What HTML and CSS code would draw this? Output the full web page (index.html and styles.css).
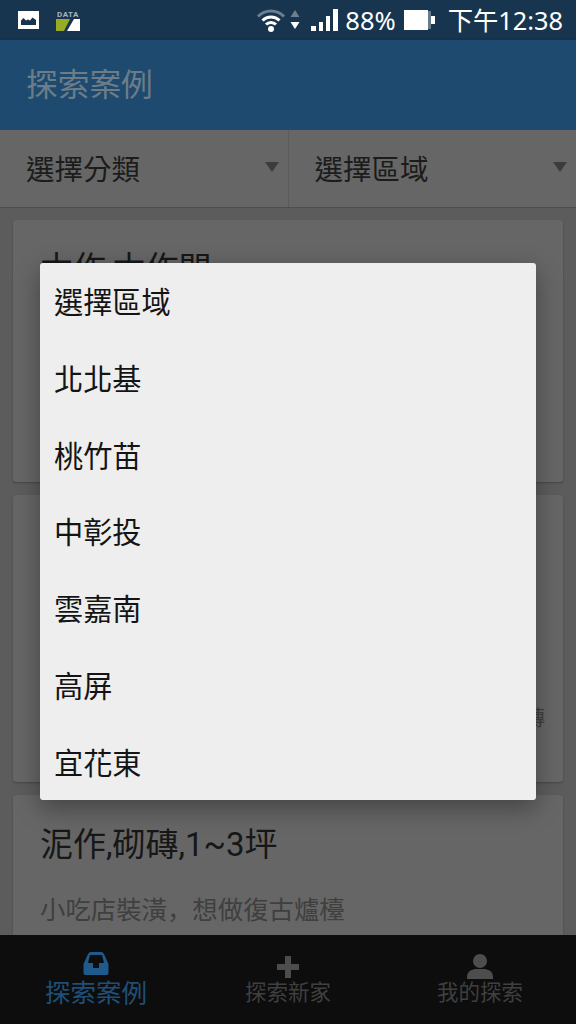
FILE: index.html
```html
<!DOCTYPE html>
<html lang="zh-Hant">
<head>
  <meta charset="UTF-8">
  <title>探索案例</title>
  <link rel="stylesheet" href="styles.css">
</head>
<body>
  <div class="screen">
    <div class="status-bar">
      <svg class="st-photo" width="21" height="18" viewBox="0 0 21 18">
        <rect width="21" height="18" fill="#fff"/>
        <path d="M3 14V9.500L5.500 7 8 9.500 10 8.500 12 9.500 14.500 6.500 18 9V14Z" fill="#17354f"/>
      </svg>
      <div class="st-data">
        <span class="st-data-label">DATA</span>
        <svg width="24" height="12" viewBox="0 0 24 12">
          <path d="M0 0H14L8 12H0Z" fill="#98ad24"/>
          <path d="M24 0V12H11L18 0Z" fill="#fff"/>
        </svg>
      </div>
      <div class="st-right">
        <svg class="st-wifi" width="30" height="26" viewBox="0 0 30 26">
          <path d="M2 9.500A18 18 0 0 1 28 9.500" fill="none" stroke="#6d7f8d" stroke-width="3"/>
          <path d="M6.500 13.500A12 12 0 0 1 23.500 13.500" fill="none" stroke="#fff" stroke-width="3"/>
          <path d="M10 17.500A7 7 0 0 1 20 17.500" fill="none" stroke="#fff" stroke-width="3"/>
          <circle cx="15" cy="22" r="3" fill="#fff"/>
        </svg>
        <svg class="st-arrows" width="10" height="22" viewBox="0 0 10 22">
          <path d="M5 1 9.500 8H.5Z" fill="#6d7f8d"/>
          <path d="M5 20 9.500 13H.5Z" fill="#fff"/>
        </svg>
        <svg class="st-signal" width="28" height="24" viewBox="0 0 28 24">
          <rect x="0" y="18" width="5" height="5" fill="#fff"/>
          <rect x="8" y="14" width="4" height="9" fill="#fff"/>
          <rect x="15" y="8" width="4" height="15" fill="#fff"/>
          <rect x="22" y="1" width="5" height="22" fill="#fff"/>
        </svg>
        <span class="st-pct">88%</span>
        <svg class="st-battery" width="31" height="20" viewBox="0 0 31 20">
          <rect x="0" y="0" width="24" height="20" fill="#fff"/>
          <rect x="24" y="1" width="3" height="18" fill="#fff" opacity=".35"/>
          <rect x="27" y="6" width="4" height="8" fill="#fff"/>
        </svg>
        <span class="st-time">下午12:38</span>
      </div>
    </div>

    <header class="app-bar">探索案例</header>

    <div class="filters">
      <div class="filter">選擇分類<i class="caret"></i></div>
      <div class="filter">選擇區域<i class="caret"></i></div>
    </div>

    <main class="list">
      <div class="card card-first">
        <div class="card-title">木作,木作門</div>
      </div>
      <div class="card card-second">
        <div class="card-desc card-desc-end">磚</div>
      </div>
      <div class="card card-last">
        <div class="card-title">泥作,砌磚,1~3坪</div>
        <div class="card-desc">小吃店裝潢<span class="low-comma" lang="zh-Hans">，</span>想做復古爐檯</div>
      </div>
    </main>

    <nav class="tabs">
      <div class="tab tab-active">
        <svg width="28" height="28" viewBox="0 0 28 28">
          <path d="M1.500 12 6 2Q7 0 9 0H19Q21 0 22 2L26.500 12V21Q26.500 23 24.500 23H3.500Q1.500 23 1.500 21ZM8 3H20L22 11H17V16H11V11H6Z" fill="#1f5a8c" fill-rule="evenodd"/>
        </svg>
        <span>探索案例</span>
      </div>
      <div class="tab">
        <svg width="28" height="28" viewBox="0 0 28 28">
          <path d="M11 4H17V12H25V18H17V26H11V18H3V12H11Z" fill="#4d4d4d"/>
        </svg>
        <span class="tab-small">探索新家</span>
      </div>
      <div class="tab">
        <svg width="28" height="28" viewBox="0 0 28 28">
          <circle cx="14" cy="9" r="7" fill="#4d4d4d"/>
          <path d="M1 27V25Q1 18 9 17H19Q27 18 27 25V27Z" fill="#4d4d4d"/>
        </svg>
        <span class="tab-small">我的探索</span>
      </div>
    </nav>

    <div class="dialog">
      <div class="dialog-item">選擇區域</div>
      <div class="dialog-item">北北基</div>
      <div class="dialog-item">桃竹苗</div>
      <div class="dialog-item">中彰投</div>
      <div class="dialog-item">雲嘉南</div>
      <div class="dialog-item">高屏</div>
      <div class="dialog-item">宜花東</div>
    </div>
  </div>
</body>
</html>
```

FILE: styles.css
```css
* {
  box-sizing: border-box;
}

body {
  margin: 0;
  font-family: Roboto, "Noto Sans CJK TC", sans-serif;
  background: #5c5c5c;
}

.screen {
  position: relative;
  display: flex;
  flex-direction: column;
  width: 576px;
  height: 1024px;
  overflow: hidden;
}

/* Status bar */
.status-bar {
  display: flex;
  align-items: center;
  flex: none;
  height: 40px;
  padding: 0 13px 0 18px;
  background: #17354f;
  color: #fff;
}

.st-data {
  display: flex;
  flex-direction: column;
  margin-left: 17px;
  width: 24px;
}

.st-data-label {
  font-size: 8px;
  font-weight: 700;
  line-height: 9px;
  letter-spacing: .5px;
  text-align: center;
  color: #a9b4bd;
}

.st-right {
  display: flex;
  align-items: center;
  margin-left: auto;
}

.st-arrows {
  margin-left: 4px;
}

.st-signal {
  margin-left: 11px;
}

.st-pct {
  margin-left: 6px;
  font-family: "Noto Sans", sans-serif;
  font-size: 25.500px;
  line-height: 40px;
}

.st-battery {
  margin-left: 8px;
}

.st-time {
  margin-left: 13px;
  font-family: "Noto Sans", "Noto Sans CJK TC", sans-serif;
  font-size: 25.300px;
  line-height: 40px;
}

/* App bar */
.app-bar {
  flex: none;
  height: 90px;
  padding: 0 26px;
  background: #1d4a6e;
  color: #6c7c88;
  font-size: 31.700px;
  line-height: 92px;
  box-shadow: 0 1px 3px rgba(0, 0, 0, .5);
}

/* Filters */
.filters {
  display: flex;
  flex: none;
  height: 78px;
  background: #666;
  border-bottom: 1px solid #4e4e4e;
}

.filter {
  display: flex;
  align-items: center;
  justify-content: space-between;
  flex: 1;
  padding: 0 9px 2px 26px;
  font-size: 28.500px;
  color: #1c1c1c;
}

.filter + .filter {
  border-left: 1px solid #5b5b5b;
}

.caret {
  width: 0;
  height: 0;
  margin-top: -2px;
  border-left: 7.500px solid transparent;
  border-right: 7.500px solid transparent;
  border-top: 10px solid #3c3c3c;
}

/* Cards */
.list {
  flex: 1;
  min-height: 0;
  padding: 12px 13px 0;
  overflow: hidden;
}

.card {
  margin-bottom: 13px;
  padding: 27px 27px 0;
  background: #666;
  border-radius: 3px;
  box-shadow: 0 1px 2px rgba(0, 0, 0, .25);
}

.card-first {
  height: 262px;
}

.card-second {
  display: flex;
  flex-direction: column;
  justify-content: flex-end;
  height: 287px;
  padding: 0 18px 46px 27px;
}

.card-last {
  height: 200px;
  padding-top: 28px;
}

.card-title {
  font-size: 33px;
  line-height: 44px;
  color: #171717;
}

.card-desc {
  margin-top: 23px;
  font-size: 25.400px;
  line-height: 36px;
  color: #3f3f3f;
}

.low-comma {
  font-family: "Noto Sans CJK SC", sans-serif;
}

.card-desc-end {
  margin-top: 0;
  font-size: 21px;
  text-align: right;
}

/* Bottom tabs */
.tabs {
  display: flex;
  flex: none;
  height: 89px;
  background: #0d0d0d;
}

.tab {
  display: flex;
  flex-direction: column;
  align-items: center;
  flex: 1;
  padding-top: 17px;
  font-size: 25.500px;
  line-height: 26px;
  color: #1f4f78;
}

.tab-small {
  font-size: 21.500px;
  color: #3f3f3f;
}

/* Region dialog */
.dialog {
  position: absolute;
  top: 263px;
  left: 40px;
  width: 496px;
  height: 537px;
  padding-top: 1px;
  background: #eee;
  border-radius: 3px;
  box-shadow: 0 8px 24px rgba(0, 0, 0, .35);
}

.dialog-item {
  height: 76.800px;
  padding: 0 14px;
  font-size: 29.200px;
  line-height: 78px;
  color: #141414;
}
```
